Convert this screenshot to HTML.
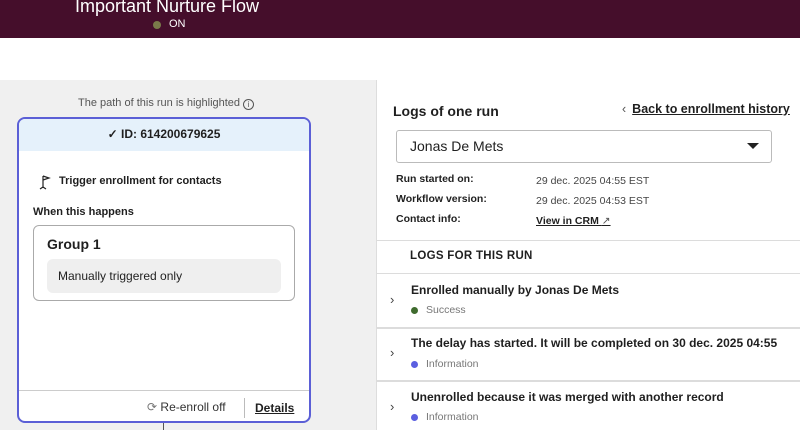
<!DOCTYPE html>
<html><head><style>
*{box-sizing:border-box;margin:0;padding:0}
body{width:800px;height:430px;overflow:hidden;font-family:"Liberation Sans",sans-serif;color:#1f1f1f;background:#fff;position:relative}
.hdr{position:absolute;left:0;top:0;width:800px;height:38px;background:#450e2b}
.abs{position:absolute;white-space:nowrap}
.left{position:absolute;left:0;top:80px;width:376px;height:350px;background:#f0f0f0}
.right{position:absolute;left:376px;top:80px;width:424px;height:350px;background:#fff;border-left:1px solid #ddd}
.card{position:absolute;left:17px;top:117px;width:294px;height:306px;background:#fff;border:2px solid #5b5fd6;border-radius:8px;overflow:hidden}
.sep{position:absolute;left:376px;width:424px;height:1px;background:#dcdcdc}
b{font-weight:bold}
</style></head><body>
<div class="hdr"></div>
<div class="abs" style="left:75px;top:-4px;color:#fff;font-size:18px">Important Nurture Flow</div>
<div class="abs" style="left:153px;top:21px;width:8px;height:8px;border-radius:50%;background:#7a7a4a"></div>
<div class="abs" style="left:169px;top:18px;color:#fff;font-size:11px">ON</div>
<div class="left"></div>
<div class="abs" style="left:78px;top:97px;font-size:11px;color:#555">The path of this run is highlighted <span style="display:inline-block;width:11px;height:11px;border:1px solid #555;border-radius:50%;font-size:8px;text-align:center;line-height:9px;vertical-align:-1px">i</span></div>
<div class="abs" style="left:163px;top:420px;width:1px;height:10px;background:#555"></div>
<div class="card">
 <div style="height:32px;background:#e5f1fb;text-align:center;font-size:12px;font-weight:bold;line-height:30px">✓ ID: 614200679625</div>
 <svg class="abs" style="left:20px;top:55px" width="14" height="16" viewBox="0 0 14 16" fill="none" stroke="#222" stroke-width="1.2"><path d="M4 2v12M4 2l6 2-6 2M1 15l3-2 3 2"/></svg>
 <div class="abs" style="left:40px;top:56px;font-size:11px;font-weight:bold">Trigger enrollment for contacts</div>
 <div class="abs" style="left:14px;top:87px;font-size:11px;font-weight:bold">When this happens</div>
 <div class="abs" style="left:14px;top:106px;width:262px;height:76px;border:1px solid #aaa;border-radius:6px"></div>
 <div class="abs" style="left:28px;top:117px;font-size:14px;font-weight:bold">Group 1</div>
 <div class="abs" style="left:28px;top:140px;width:234px;height:34px;background:#efefef;border-radius:6px;font-size:12px;line-height:34px;padding-left:11px">Manually triggered only</div>
 <div class="abs" style="left:0;top:271px;width:294px;height:1px;background:#ccc"></div>
 <div class="abs" style="left:128px;top:281px;font-size:12px;color:#333"><span style="color:#777">⟳</span> Re-enroll off</div>
 <div class="abs" style="left:225px;top:279px;width:1px;height:20px;background:#bbb"></div>
 <div class="abs" style="left:236px;top:282px;font-size:12px;font-weight:bold;text-decoration:underline">Details</div>
</div>
<div class="right"></div>
<div class="abs" style="left:393px;top:103px;font-size:14px;font-weight:bold">Logs of one run</div>
<div class="abs" style="left:622px;top:102px;font-size:12.5px;font-weight:bold;text-decoration:underline"><span style="font-weight:normal;text-decoration:none;color:#555;display:inline-block;margin-right:6px">‹</span>Back to enrollment history</div>
<div class="abs" style="left:396px;top:130px;width:376px;height:33px;border:1px solid #bbb;border-radius:3px"></div>
<div class="abs" style="left:410px;top:138px;font-size:14px">Jonas De Mets</div>
<div class="abs" style="left:747px;top:143px;width:0;height:0;border-left:6px solid transparent;border-right:6px solid transparent;border-top:6px solid #222"></div>
<div class="abs" style="left:396px;top:173px;font-size:10.5px;font-weight:bold">Run started on:</div>
<div class="abs" style="left:396px;top:193px;font-size:10.5px;font-weight:bold">Workflow version:</div>
<div class="abs" style="left:396px;top:213px;font-size:10.5px;font-weight:bold">Contact info:</div>
<div class="abs" style="left:536px;top:175px;font-size:10.5px;color:#444">29 dec. 2025 04:55 EST</div>
<div class="abs" style="left:536px;top:195px;font-size:10.5px;color:#444">29 dec. 2025 04:53 EST</div>
<div class="abs" style="left:536px;top:215px;font-size:10.5px;font-weight:bold;text-decoration:underline">View in CRM <span style="font-weight:normal;color:#555">↗</span></div>
<div class="sep" style="top:240px"></div>
<div class="abs" style="left:410px;top:250px;font-size:11.5px;font-weight:bold;letter-spacing:.3px">LOGS FOR THIS RUN</div>
<div class="sep" style="top:273px"></div>
<div class="sep" style="top:327px;height:2px"></div>
<div class="sep" style="top:380px;height:2px"></div>
<div class="abs" style="left:390px;top:292px;font-size:13px;color:#444">›</div>
<div class="abs" style="left:411px;top:283px;font-size:12px;font-weight:bold">Enrolled manually by Jonas De Mets</div>
<div class="abs" style="left:411px;top:307px;width:7px;height:7px;border-radius:50%;background:#3f6b2e"></div>
<div class="abs" style="left:426px;top:304px;font-size:10.5px;color:#777">Success</div>
<div class="abs" style="left:390px;top:345px;font-size:13px;color:#444">›</div>
<div class="abs" style="left:411px;top:336px;font-size:12px;font-weight:bold">The delay has started. It will be completed on 30 dec. 2025 04:55</div>
<div class="abs" style="left:411px;top:361px;width:7px;height:7px;border-radius:50%;background:#5b5fe0"></div>
<div class="abs" style="left:426px;top:358px;font-size:10.5px;color:#777">Information</div>
<div class="abs" style="left:390px;top:399px;font-size:13px;color:#444">›</div>
<div class="abs" style="left:411px;top:390px;font-size:12px;font-weight:bold">Unenrolled because it was merged with another record</div>
<div class="abs" style="left:411px;top:414px;width:7px;height:7px;border-radius:50%;background:#5b5fe0"></div>
<div class="abs" style="left:426px;top:411px;font-size:10.5px;color:#777">Information</div>
</body></html>
